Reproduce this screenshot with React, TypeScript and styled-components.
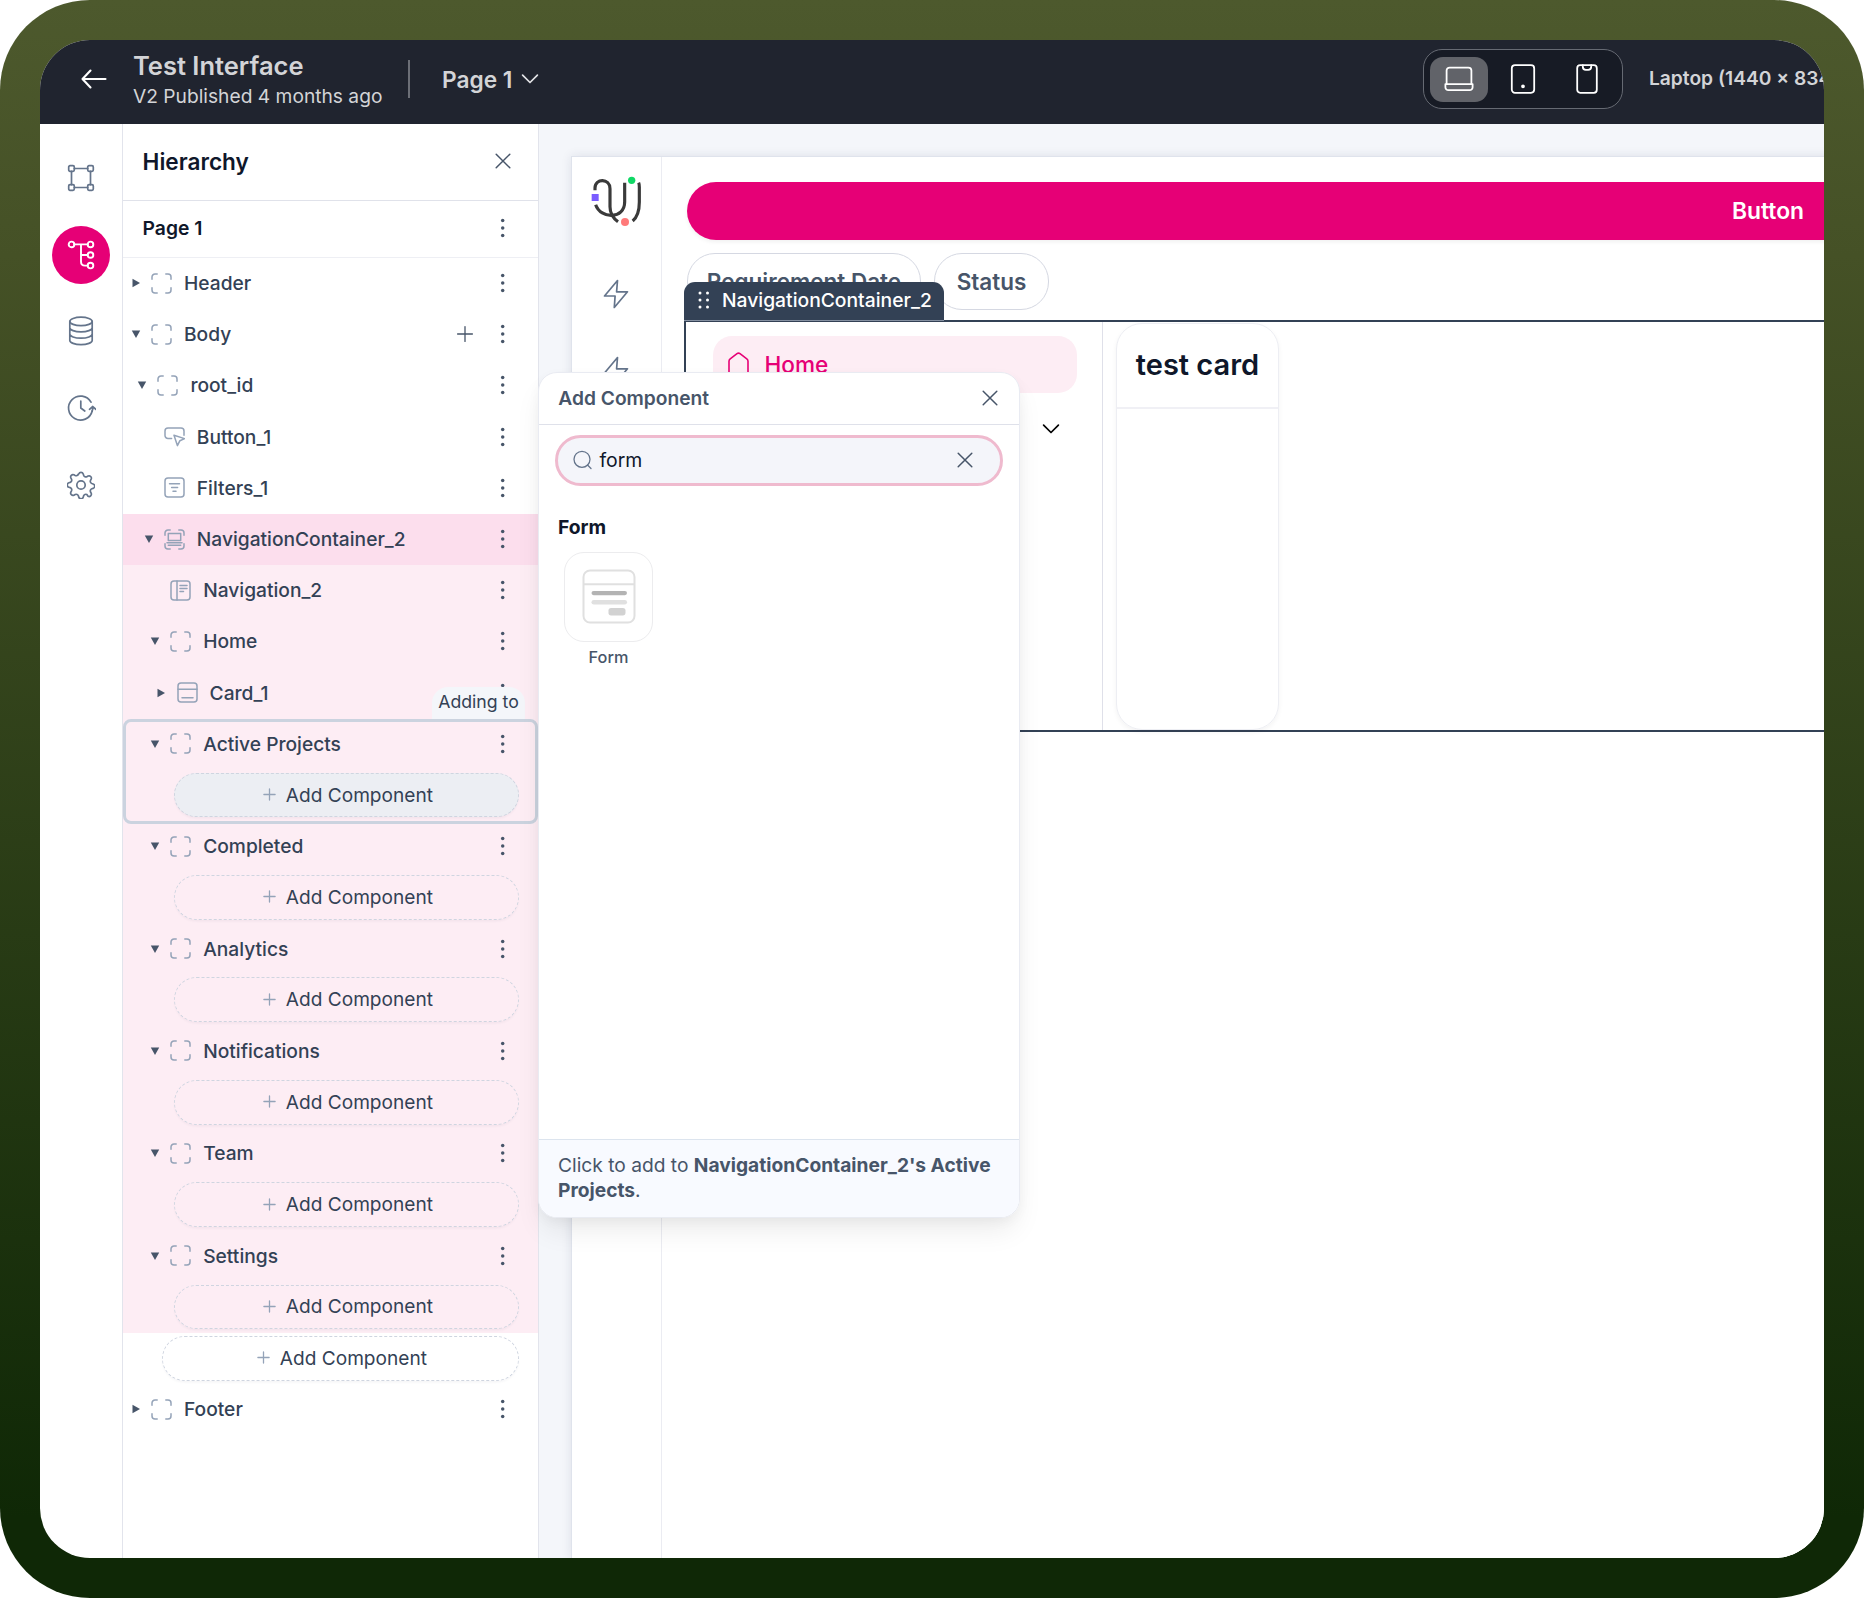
import React from 'react';
import styled, { createGlobalStyle } from 'styled-components';

const GlobalStyle = createGlobalStyle`
  *, *::before, *::after { box-sizing: border-box; }
  body { margin: 0; background: #fff; font-family: Inter, "Liberation Sans", sans-serif; }
  svg { display: block; flex: none; }
`;

const Stage = styled.div`
  width: 1864px;
  height: 1598px;
  padding: 40px;
  border-radius: 90px;
  background: linear-gradient(180deg, #4d592d 0%, #455126 16%, #0f2806 95%, #0f2806 100%);
`;

const Window = styled.div`
  position: relative;
  display: flex;
  flex-direction: column;
  width: 1784px;
  height: 1518px;
  overflow: hidden;
  border-radius: 50px;
  background: #fff;
`;

/* Top bar */

const TopBar = styled.header`
  display: flex;
  align-items: center;
  flex: none;
  height: 84px;
  padding: 0 0 6px 40px;
  background: #20242f;
  color: #d3d4d7;
  white-space: nowrap;
`;

const TitleBlock = styled.div`
  display: flex;
  flex-direction: column;
  width: 275px;
  margin-left: 25px;
  padding-top: 1px;
`;

const Title = styled.div`
  font-size: 25.5px;
  line-height: 33px;
  font-weight: 600;
`;

const Subtitle = styled.div`
  font-size: 19.2px;
  line-height: 28px;
`;

const BarDivider = styled.div`
  width: 2px;
  height: 38px;
  background: #6c6f77;
`;

const PagePicker = styled.div`
  display: flex;
  align-items: center;
  gap: 9px;
  margin-left: 32px;
  font-size: 22.700px;
  font-weight: 600;
`;

const DeviceGroup = styled.div`
  display: flex;
  align-items: center;
  gap: 6px;
  width: 200px;
  height: 60px;
  margin-left: auto;
  padding: 0 6px;
  border: 1px solid #666a73;
  border-radius: 19px;
  background: #171b25;
`;

const DeviceButton = styled.div<{ $active?: boolean }>`
  display: flex;
  align-items: center;
  justify-content: center;
  width: 58px;
  height: 45px;
  border-radius: 13px;
  background: ${p => (p.$active ? '#616369' : 'transparent')};
`;

const DeviceLabel = styled.div`
  width: 175px;
  margin-left: 26px;
  padding-bottom: 2px;
  overflow: hidden;
  font-size: 19.2px;
  line-height: 28px;
  font-weight: 600;
`;

/* Shell */

const Shell = styled.div`
  display: flex;
  flex: 1;
  min-height: 0;
`;

const Rail = styled.nav`
  display: flex;
  flex-direction: column;
  align-items: center;
  gap: 18.7px;
  flex: none;
  width: 83px;
  padding-top: 25px;
  border-right: 1px solid #e2e4ec;
  color: #64748b;
`;

const RailButton = styled.div<{ $active?: boolean }>`
  display: flex;
  align-items: center;
  justify-content: center;
  width: 58px;
  height: 58px;
  border-radius: 50%;
  background: ${p => (p.$active ? '#e60076' : 'transparent')};
  color: ${p => (p.$active ? '#fff' : 'inherit')};
`;

const Panel = styled.aside`
  flex: none;
  width: 416px;
  border-right: 1px solid #e2e4ec;
  background: #fff;
  color: #334155;
`;

const PanelHeader = styled.div<{ $sub?: boolean }>`
  display: flex;
  align-items: center;
  justify-content: space-between;
  height: ${p => (p.$sub ? 57 : 77)}px;
  padding: 0 25px 1.500px 19.6px;
  border-bottom: 1px solid ${p => (p.$sub ? '#eeeff4' : '#e0e2ea')};
  color: #0f172a;
  font-size: ${p => (p.$sub ? 19.3 : 22.6)}px;
  font-weight: 600;
`;

const Row = styled.div<{ $level: number; $selected?: boolean }>`
  display: flex;
  align-items: center;
  height: 51.2px;
  padding: 0 25px 1px ${p => 4.8 + p.$level * 6.4}px;
  background: ${p => (p.$selected ? '#fcdeed' : 'transparent')};
`;

const CaretBox = styled.div`
  display: flex;
  justify-content: center;
  width: 16px;
  margin-right: 7.2px;
`;

const RowLabel = styled.div`
  flex: 1;
  margin-left: 12px;
  font-size: 19.2px;
  line-height: 28px;
  font-weight: 500;
`;

const RowActions = styled.div`
  display: flex;
  align-items: center;
  gap: 18px;
`;

const SelectedTree = styled.div`
  background: #fdedf4;
`;

const TargetGroup = styled.div`
  position: relative;
`;

const TargetOutline = styled.div`
  position: absolute;
  inset: 0 0 -2.6px 0;
  border: 3px solid #cbd3df;
  border-radius: 8px;
`;

const TargetBadge = styled.div`
  position: absolute;
  right: 13px;
  bottom: 100%;
  width: 93px;
  height: 32px;
  padding-top: 1px;
  border-radius: 16px 16px 0 0;
  background: #f4f6fa;
  color: #334155;
  font-size: 17.7px;
  line-height: 28px;
  text-align: center;
`;

const Slot = styled.div<{ $root?: boolean }>`
  height: 51.2px;
  padding: 2.8px 19px 0 ${p => (p.$root ? 39.2 : 51.2)}px;
`;

const SlotButton = styled.div<{ $active?: boolean }>`
  display: flex;
  align-items: center;
  justify-content: center;
  gap: 6.6px;
  height: 44.8px;
  padding-bottom: 1px;
  border: 1px dashed #cfd5e0;
  border-radius: 23px;
  background: ${p => (p.$active ? '#eceef3' : 'transparent')};
  box-shadow: 0 2px 3px -1px rgba(40, 30, 60, 0.06);
  font-size: 19.1px;
`;

/* Canvas */

const Canvas = styled.main`
  flex: 1;
  min-width: 0;
  padding: 32px 0 0 32px;
  overflow: hidden;
  background: #f4f6fa;
`;

const Frame = styled.div`
  display: flex;
  width: 2304px;
  height: 100%;
  border: 1px solid #dfe3ec;
  border-bottom: 0;
  background: #fff;
  box-shadow: 0 0 10px rgba(30, 41, 80, 0.1);
`;

const MiniRail = styled.div`
  display: flex;
  flex-direction: column;
  align-items: center;
  flex: none;
  width: 90px;
  padding: 18px 1px 0 0;
  border-right: 1px solid #ebecf2;
  color: #64748b;
`;

const BoltSlot = styled.div<{ $gap: number }>`
  margin-top: ${p => p.$gap}px;
`;

const AppBody = styled.div`
  flex: 1;
  min-width: 0;
  padding: 25px 25px 0;
`;

const PinkButton = styled.div`
  display: flex;
  align-items: center;
  justify-content: center;
  height: 58px;
  padding-bottom: 1.500px;
  border-radius: 29px;
  background: #e60076;
  box-shadow: 0 2px 4px rgba(0, 0, 0, 0.06);
  color: #fff;
  font-size: 22.8px;
  font-weight: 600;
`;

const Filters = styled.div`
  display: flex;
  gap: 13px;
  margin-top: 13px;
`;

const FilterPill = styled.div<{ $width: number }>`
  display: flex;
  align-items: center;
  justify-content: center;
  width: ${p => p.$width}px;
  height: 57px;
  padding-bottom: 1px;
  border: 1px solid #d5d8e2;
  border-radius: 28px;
  color: #475569;
  font-size: 22.5px;
  font-weight: 600;
`;

const NavContainer = styled.section`
  position: relative;
  display: flex;
  height: 412px;
  margin: 10px -3px 0;
  border: 2px solid #334155;
`;

const NavTag = styled.div`
  position: absolute;
  left: -2px;
  bottom: calc(100% + 1.5px);
  display: flex;
  align-items: center;
  gap: 12px;
  width: 260px;
  height: 39px;
  padding: 0 0 1.500px 14px;
  border-bottom: 1px solid #8590a1;
  border-radius: 11px 11px 0 0;
  background: #334155;
  color: #fff;
  font-size: 19.3px;
  font-weight: 500;
`;

const NavColumn = styled.div`
  display: flex;
  flex-direction: column;
  gap: 8px;
  flex: none;
  width: 417px;
  padding: 14px 25px 0 27px;
  border-right: 1px solid #dfe0e9;
`;

const NavItem = styled.div<{ $active?: boolean }>`
  display: flex;
  align-items: center;
  justify-content: ${p => (p.$active ? 'flex-start' : 'flex-end')};
  gap: 15.5px;
  height: 57px;
  padding: 0 17.500px 1px 15px;
  border-radius: 19px;
  background: ${p => (p.$active ? '#fdedf4' : 'transparent')};
  color: ${p => (p.$active ? '#e60076' : '#000')};
  font-size: 22.6px;
  font-weight: 500;
`;

const Card = styled.div`
  width: 163px;
  height: 407px;
  margin: 1px 0 0 13px;
  border: 1px solid #edeef3;
  border-radius: 26px;
  box-shadow: 0 2px 5px rgba(0, 0, 0, 0.05);
`;

const CardTitle = styled.div`
  height: 85px;
  padding-top: 21px;
  border-bottom: 2px solid #f0f0f5;
  color: #0f172a;
  font-size: 29px;
  line-height: 40px;
  font-weight: 600;
  text-align: center;
`;

/* Add component popover */

const Popover = styled.div`
  position: absolute;
  left: 498px;
  top: 332px;
  display: flex;
  flex-direction: column;
  width: 482px;
  height: 846px;
  overflow: hidden;
  border: 1px solid #e9ebf2;
  border-radius: 19px;
  background: #fff;
`;

const PopoverShadow = styled.div`
  position: absolute;
  left: 498px;
  top: 332px;
  width: 482px;
  height: 846px;
  border-radius: 19px;
  box-shadow: 0 16px 28px -4px rgba(0, 0, 0, 0.08), 0 4px 14px -2px rgba(0, 0, 0, 0.05);
`;

const PopoverHeader = styled.div`
  display: flex;
  align-items: center;
  justify-content: space-between;
  height: 52px;
  padding: 0 19.500px 2px 19.3px;
  border-bottom: 1px solid #dfe1ea;
  color: #475569;
  font-size: 19.2px;
  font-weight: 600;
`;

const PopoverBody = styled.div`
  flex: 1;
  padding: 10px 16px 0;
`;

const SearchField = styled.div`
  display: flex;
  align-items: center;
  height: 51px;
  padding: 0 25.500px 1.500px 14.500px;
  border: 3px solid #efbace;
  border-radius: 26px;
  background: #f4f5fa;
  color: #0f172a;
`;

const SearchText = styled.div`
  flex: 1;
  margin-left: 8px;
  font-size: 19.4px;
`;

const GroupTitle = styled.div`
  margin: 29px 3px 12px;
  color: #0f172a;
  font-size: 19.3px;
  line-height: 25px;
  font-weight: 700;
`;

const Tile = styled.div`
  display: flex;
  flex-direction: column;
  align-items: center;
  gap: 3px;
  width: 89px;
  margin-left: 9px;
  color: #475569;
  font-size: 16.3px;
  line-height: 24px;
  font-weight: 500;
`;

const TileFrame = styled.div`
  display: flex;
  align-items: center;
  justify-content: center;
  width: 89px;
  height: 90px;
  padding-bottom: 1.500px;
  border: 1px solid #ececee;
  border-radius: 20px;
`;

const PopoverFooter = styled.div`
  flex: none;
  height: 78px;
  padding: 13px 19px 0;
  border-top: 1px solid #dce4ee;
  background: #f8faff;
  color: #475569;
  font-size: 19.2px;
  line-height: 25px;

  b { font-weight: 700; }
`;

/* Icons */

const Dots = () => (
  <svg width="20" height="22" viewBox="0 0 20 22" fill="#475569">
    <circle cx="9.700" cy="3.500" r="1.750" />
    <circle cx="9.700" cy="11" r="1.750" />
    <circle cx="9.700" cy="18.500" r="1.750" />
  </svg>
);

const Close = () => (
  <svg width="20" height="20" viewBox="0 0 20 20" stroke="#475569" strokeWidth="1.5" strokeLinecap="round">
    <path d="M3.2 3.2l13.6 13.6M16.8 3.2L3.2 16.8" />
  </svg>
);

const Plus = ({ size, color, reach }: { size: number; color: string; reach: number }) => (
  <svg width={size} height={size} viewBox={`${-size / 2} ${-size / 2} ${size} ${size}`} stroke={color} strokeWidth="1.3" strokeLinecap="round">
    <path d={`M${-reach} 0H${reach}M0 ${-reach}V${reach}`} />
  </svg>
);

const Chevron = ({ color }: { color: string }) => (
  <svg width="18" height="12" viewBox="0 0 18 12" fill="none" stroke={color} strokeWidth="1.7" strokeLinecap="round" strokeLinejoin="round">
    <path d="M1.6 2.2L9 9.5l7.400-7.300" />
  </svg>
);

const Caret = ({ open }: { open: boolean }) => (
  <svg width="10" height="10" viewBox="0 0 10 10" fill="#475569">
    {open ? <path d="M.800 1.500h8.400L5 9z" /> : <path d="M1.500.800v8.400L9 5z" />}
  </svg>
);

type Kind = 'frame' | 'button' | 'filter' | 'navc' | 'nav' | 'card';

const corners = 'M1 6.200V4a3 3 0 0 1 3-3h2.200M14.800 1H17a3 3 0 0 1 3 3v2.200M20 14.800V17a3 3 0 0 1-3 3h-2.200M6.200 20H4a3 3 0 0 1-3-3v-2.200';

const KindIcon = ({ kind }: { kind: Kind }) => (
  <svg width="21" height="21" viewBox="0 0 21 21" fill="none" stroke="#94a3b8" strokeWidth="1.5" strokeLinecap="round" strokeLinejoin="round">
    {kind === 'frame' && <path d={corners} />}
    {kind === 'button' && (
      <>
        <path d="M7.600 12.500H4a3 3 0 0 1-3-3V5a3 3 0 0 1 3-3h13a3 3 0 0 1 3 3v4.200" />
        <path d="M10 9.200l10.600 3.400-4.700 2.100-2.500 4.900z" />
      </>
    )}
    {kind === 'filter' && (
      <>
        <rect x="1" y="1" width="19" height="19" rx="3" />
        <path d="M5.500 6.800h10M7.600 10.500h6M9 14.200h3" />
      </>
    )}
    {kind === 'navc' && (
      <>
        <path d={corners} />
        <path d="M4.300 4.600h12.400v6.800H4.300zM4.300 16.300h12.400M3 13.800h15" />
      </>
    )}
    {kind === 'nav' && (
      <>
        <rect x="1" y="1" width="19" height="19" rx="3" />
        <path d="M7 1v19M10 5.500h7M10 8.500h7M10 11.500h3.500" />
      </>
    )}
    {kind === 'card' && (
      <>
        <rect x="1" y="1" width="19" height="19" rx="3" />
        <path d="M1 7.300h19M5 15.700h11" />
      </>
    )}
  </svg>
);

const Bolt = () => (
  <svg width="26" height="30" viewBox="0 0 26 30" fill="none" stroke="#64748b" strokeWidth="1.700" strokeLinejoin="round">
    <path d="M14.500 1.500L1.500 17h10.600l-.8 11.500L24.500 12.800H13.600z" />
  </svg>
);

const Logo = () => (
  <svg width="54" height="54" viewBox="58 45 162 162" fill="none" stroke="#3a3a3a" strokeWidth="9.500">
    <path d="M76 91v-7c0-30 45-30 45 2v54c0 22 9 34 24 45" />
    <path d="M78 134c15 44 87 44 87-8V68" />
    <path d="M207 68q2 4 2 14v44c0 28-7 46-20 57" />
    <rect x="66" y="102" width="21" height="21" fill="#7a5cff" stroke="none" />
    <circle cx="186" cy="61" r="11" fill="#0fd865" stroke="none" />
    <circle cx="166" cy="186" r="12" fill="#ff7a7a" stroke="none" />
  </svg>
);

const railStroke = { fill: 'none', stroke: 'currentColor', strokeWidth: 1.7, strokeLinecap: 'round', strokeLinejoin: 'round' } as const;

const SelectionIcon = () => (
  <svg width="28" height="28" viewBox="0 0 28 28" {...railStroke}>
    <rect x="1.700" y="1.700" width="5.600" height="5.600" rx="1.300" />
    <rect x="20.700" y="1.700" width="5.600" height="5.600" rx="1.300" />
    <rect x="1.700" y="20.700" width="5.600" height="5.600" rx="1.300" />
    <rect x="20.700" y="20.700" width="5.600" height="5.600" rx="1.300" />
    <path d="M7.300 4.500h13.400M7.300 23.500h13.400M4.500 7.300v13.400M23.500 7.300v13.400" />
  </svg>
);

const TreeIcon = () => (
  <svg width="28" height="30" viewBox="0 0 28 30" {...railStroke} strokeWidth="1.900">
    <circle cx="4.500" cy="4.400" r="2.800" />
    <circle cx="23.500" cy="4.400" r="2.800" />
    <circle cx="23.500" cy="15" r="2.800" />
    <circle cx="23.500" cy="25.600" r="2.800" />
    <path d="M7.300 4.400h13.400M14 4.400v17c0 2.500 1.500 4.200 4 4.200h2.700M14 15h6.700" />
  </svg>
);

const DataIcon = () => (
  <svg width="28" height="30" viewBox="0 0 28 30" {...railStroke}>
    <ellipse cx="14" cy="5.400" rx="11.200" ry="4.200" />
    <path d="M2.800 5.400v19c0 2.300 5 4.200 11.200 4.200s11.200-1.900 11.200-4.200v-19M2.800 11.700c0 2.300 5 4.200 11.200 4.200s11.200-1.900 11.200-4.200M2.800 18c0 2.300 5 4.200 11.200 4.200S25.200 20.300 25.200 18" />
  </svg>
);

const HistoryIcon = () => (
  <svg width="30" height="30" viewBox="0 0 30 30" {...railStroke}>
    <path d="M25 9.200A12 12 0 1 0 26.200 18M14.800 8.200V15l4 3" />
    <path d="M23.500 16.300l3.300-2.800 3 2.800M26.900 14c.1 1.600-.2 2.800-.8 4" />
  </svg>
);

const GearIcon = () => (
  <svg width="28" height="28" viewBox="0 0 24 24" {...railStroke} strokeWidth="1.450">
    <circle cx="12" cy="12" r="3.600" />
    <path d="M10.100 2.600a2 2 0 0 1 3.800 0l.35 1.100a2 2 0 0 0 2.750 1.150l1.050-.55a2 2 0 0 1 2.650 2.650l-.55 1.050a2 2 0 0 0 1.150 2.750l1.100.35a2 2 0 0 1 0 3.800l-1.100.35a2 2 0 0 0-1.150 2.750l.55 1.050a2 2 0 0 1-2.650 2.650L17 20.150a2 2 0 0 0-2.750 1.150l-.35 1.100a2 2 0 0 1-3.800 0l-.35-1.100A2 2 0 0 0 7 20.150l-1.050.55a2 2 0 0 1-2.650-2.650L3.850 17a2 2 0 0 0-1.150-2.750l-1.100-.35a2 2 0 0 1 0-3.800l1.100-.35A2 2 0 0 0 3.850 7L3.300 5.950A2 2 0 0 1 5.950 3.300L7 3.850A2 2 0 0 0 9.750 2.700z" />
  </svg>
);

const BackIcon = () => (
  <svg width="28" height="24" viewBox="0 0 28 24" fill="none" stroke="#fff" strokeWidth="2.100" strokeLinecap="round" strokeLinejoin="round">
    <path d="M25.500 12H2.500M10.500 3.500L2.500 12l8 8.500" />
  </svg>
);

const deviceStroke = { fill: 'none', stroke: '#fff', strokeWidth: 1.8, strokeLinecap: 'round', strokeLinejoin: 'round' } as const;

const LaptopIcon = () => (
  <svg width="30" height="26" viewBox="0 0 30 26" {...deviceStroke}>
    <path d="M2.600 18V4.600a3 3 0 0 1 3-3h18.800a3 3 0 0 1 3 3V18" />
    <path d="M1.400 18.100h27.200v3.100a3 3 0 0 1-3 3H4.400a3 3 0 0 1-3-3z" />
  </svg>
);

const TabletIcon = () => (
  <svg width="26" height="30" viewBox="0 0 26 30" {...deviceStroke}>
    <rect x="1.800" y="1.200" width="22.400" height="27.600" rx="3.200" />
    <circle cx="13" cy="22.300" r="1" fill="#fff" />
  </svg>
);

const PhoneIcon = () => (
  <svg width="24" height="30" viewBox="0 0 24 30" {...deviceStroke}>
    <rect x="2.200" y="1.200" width="19.600" height="27.600" rx="3" />
    <path d="M7.800 1.200v1.600a3 3 0 0 0 3 3h2.400a3 3 0 0 0 3-3V1.200" />
  </svg>
);

const HomeIcon = () => (
  <svg width="21" height="24" viewBox="0 0 21 24" fill="none" stroke="#e60076" strokeWidth="1.600" strokeLinejoin="round">
    <path d="M1 22.500V9.200a3 3 0 0 1 1.200-2.400L9 1.700a2.500 2.500 0 0 1 3 0l6.800 5.100A3 3 0 0 1 20 9.200v13.300z" />
  </svg>
);

const SearchIcon = () => (
  <svg width="19" height="20" viewBox="0 0 19 20" fill="none" stroke="#64748b" strokeWidth="1.300" strokeLinecap="round">
    <circle cx="9" cy="9.300" r="8" />
    <path d="M14.500 15l3.500 3.500" />
  </svg>
);

const GripIcon = () => (
  <svg width="12" height="18" viewBox="0 0 12 18" fill="#fff">
    {[2, 9, 16].map(y => (
      <React.Fragment key={y}>
        <circle cx="2" cy={y} r="1.500" />
        <circle cx="9.500" cy={y} r="1.500" />
      </React.Fragment>
    ))}
  </svg>
);

const FormPreview = () => (
  <svg width="54" height="55" viewBox="0 0 54 55" fill="none">
    <rect x="1.500" y="1.500" width="51" height="52" rx="6.500" stroke="#e0e0e0" strokeWidth="2" />
    <path d="M1.500 15.200h51" stroke="#e0e0e0" strokeWidth="2" />
    <rect x="9.500" y="22" width="35.500" height="4.200" rx="2.100" fill="#b3b3b3" />
    <rect x="9.500" y="31" width="35.500" height="4.400" rx="2.200" fill="#e0e0e0" />
    <rect x="26.500" y="39" width="17" height="7.400" rx="2.600" fill="#d2d2d2" />
  </svg>
);

/* Tree parts */

interface TreeRowProps {
  label: string;
  kind?: Kind;
  level: number;
  caret?: 'open' | 'closed';
  selected?: boolean;
  addable?: boolean;
}

const TreeRow = ({ label, kind = 'frame', level, caret, selected, addable }: TreeRowProps) => (
  <Row $level={level} $selected={selected}>
    <CaretBox>{caret && <Caret open={caret === 'open'} />}</CaretBox>
    <KindIcon kind={kind} />
    <RowLabel>{label}</RowLabel>
    <RowActions>
      {addable && <Plus size={20} color="#475569" reach={7.4} />}
      <Dots />
    </RowActions>
  </Row>
);

const AddSlot = ({ root, active }: { root?: boolean; active?: boolean }) => (
  <Slot $root={root}>
    <SlotButton $active={active}>
      <Plus size={19} color="#94a3b8" reach={5.6} />
      Add Component
    </SlotButton>
  </Slot>
);

const emptyPages = ['Completed', 'Analytics', 'Notifications', 'Team', 'Settings'];

export default function App() {
  return (
    <>
      <GlobalStyle />
      <Stage>
        <Window>
          <TopBar>
            <BackIcon />
            <TitleBlock>
              <Title>Test Interface</Title>
              <Subtitle>V2 Published 4 months ago</Subtitle>
            </TitleBlock>
            <BarDivider />
            <PagePicker>
              Page 1
              <Chevron color="#e2e3e6" />
            </PagePicker>
            <DeviceGroup>
              <DeviceButton $active><LaptopIcon /></DeviceButton>
              <DeviceButton><TabletIcon /></DeviceButton>
              <DeviceButton><PhoneIcon /></DeviceButton>
            </DeviceGroup>
            <DeviceLabel>Laptop (1440 × 834)</DeviceLabel>
          </TopBar>

          <Shell>
            <Rail>
              <RailButton><SelectionIcon /></RailButton>
              <RailButton $active><TreeIcon /></RailButton>
              <RailButton><DataIcon /></RailButton>
              <RailButton><HistoryIcon /></RailButton>
              <RailButton><GearIcon /></RailButton>
            </Rail>

            <Panel>
              <PanelHeader>
                Hierarchy
                <Close />
              </PanelHeader>
              <PanelHeader $sub>
                Page 1
                <Dots />
              </PanelHeader>
              <TreeRow label="Header" level={0} caret="closed" />
              <TreeRow label="Body" level={0} caret="open" addable />
              <TreeRow label="root_id" level={1} caret="open" />
              <TreeRow label="Button_1" kind="button" level={2} />
              <TreeRow label="Filters_1" kind="filter" level={2} />
              <SelectedTree>
                <TreeRow label="NavigationContainer_2" kind="navc" level={2} caret="open" selected />
                <TreeRow label="Navigation_2" kind="nav" level={3} />
                <TreeRow label="Home" level={3} caret="open" />
                <TreeRow label="Card_1" kind="card" level={4} caret="closed" />
                <TargetGroup>
                  <TreeRow label="Active Projects" level={3} caret="open" />
                  <AddSlot active />
                  <TargetOutline />
                  <TargetBadge>Adding to</TargetBadge>
                </TargetGroup>
                {emptyPages.map(name => (
                  <React.Fragment key={name}>
                    <TreeRow label={name} level={3} caret="open" />
                    <AddSlot />
                  </React.Fragment>
                ))}
              </SelectedTree>
              <AddSlot root />
              <TreeRow label="Footer" level={0} caret="closed" />
            </Panel>

            <Canvas>
              <Frame>
                <MiniRail>
                  <Logo />
                  <BoltSlot $gap={50}><Bolt /></BoltSlot>
                  <BoltSlot $gap={47}><Bolt /></BoltSlot>
                </MiniRail>
                <AppBody>
                  <PinkButton>Button</PinkButton>
                  <Filters>
                    <FilterPill $width={234}>Requirement Date</FilterPill>
                    <FilterPill $width={115}>Status</FilterPill>
                  </Filters>
                  <NavContainer>
                    <NavTag>
                      <GripIcon />
                      NavigationContainer_2
                    </NavTag>
                    <NavColumn>
                      <NavItem $active>
                        <HomeIcon />
                        Home
                      </NavItem>
                      <NavItem><Chevron color="#000" /></NavItem>
                    </NavColumn>
                    <Card>
                      <CardTitle>test card</CardTitle>
                    </Card>
                  </NavContainer>
                </AppBody>
              </Frame>
            </Canvas>
          </Shell>

          <PopoverShadow />
          <Popover>
            <PopoverHeader>
              Add Component
              <Close />
            </PopoverHeader>
            <PopoverBody>
              <SearchField>
                <SearchIcon />
                <SearchText>form</SearchText>
                <Close />
              </SearchField>
              <GroupTitle>Form</GroupTitle>
              <Tile>
                <TileFrame><FormPreview /></TileFrame>
                Form
              </Tile>
            </PopoverBody>
            <PopoverFooter>
              Click to add to <b>NavigationContainer_2's Active Projects</b>.
            </PopoverFooter>
          </Popover>
        </Window>
      </Stage>
    </>
  );
}
